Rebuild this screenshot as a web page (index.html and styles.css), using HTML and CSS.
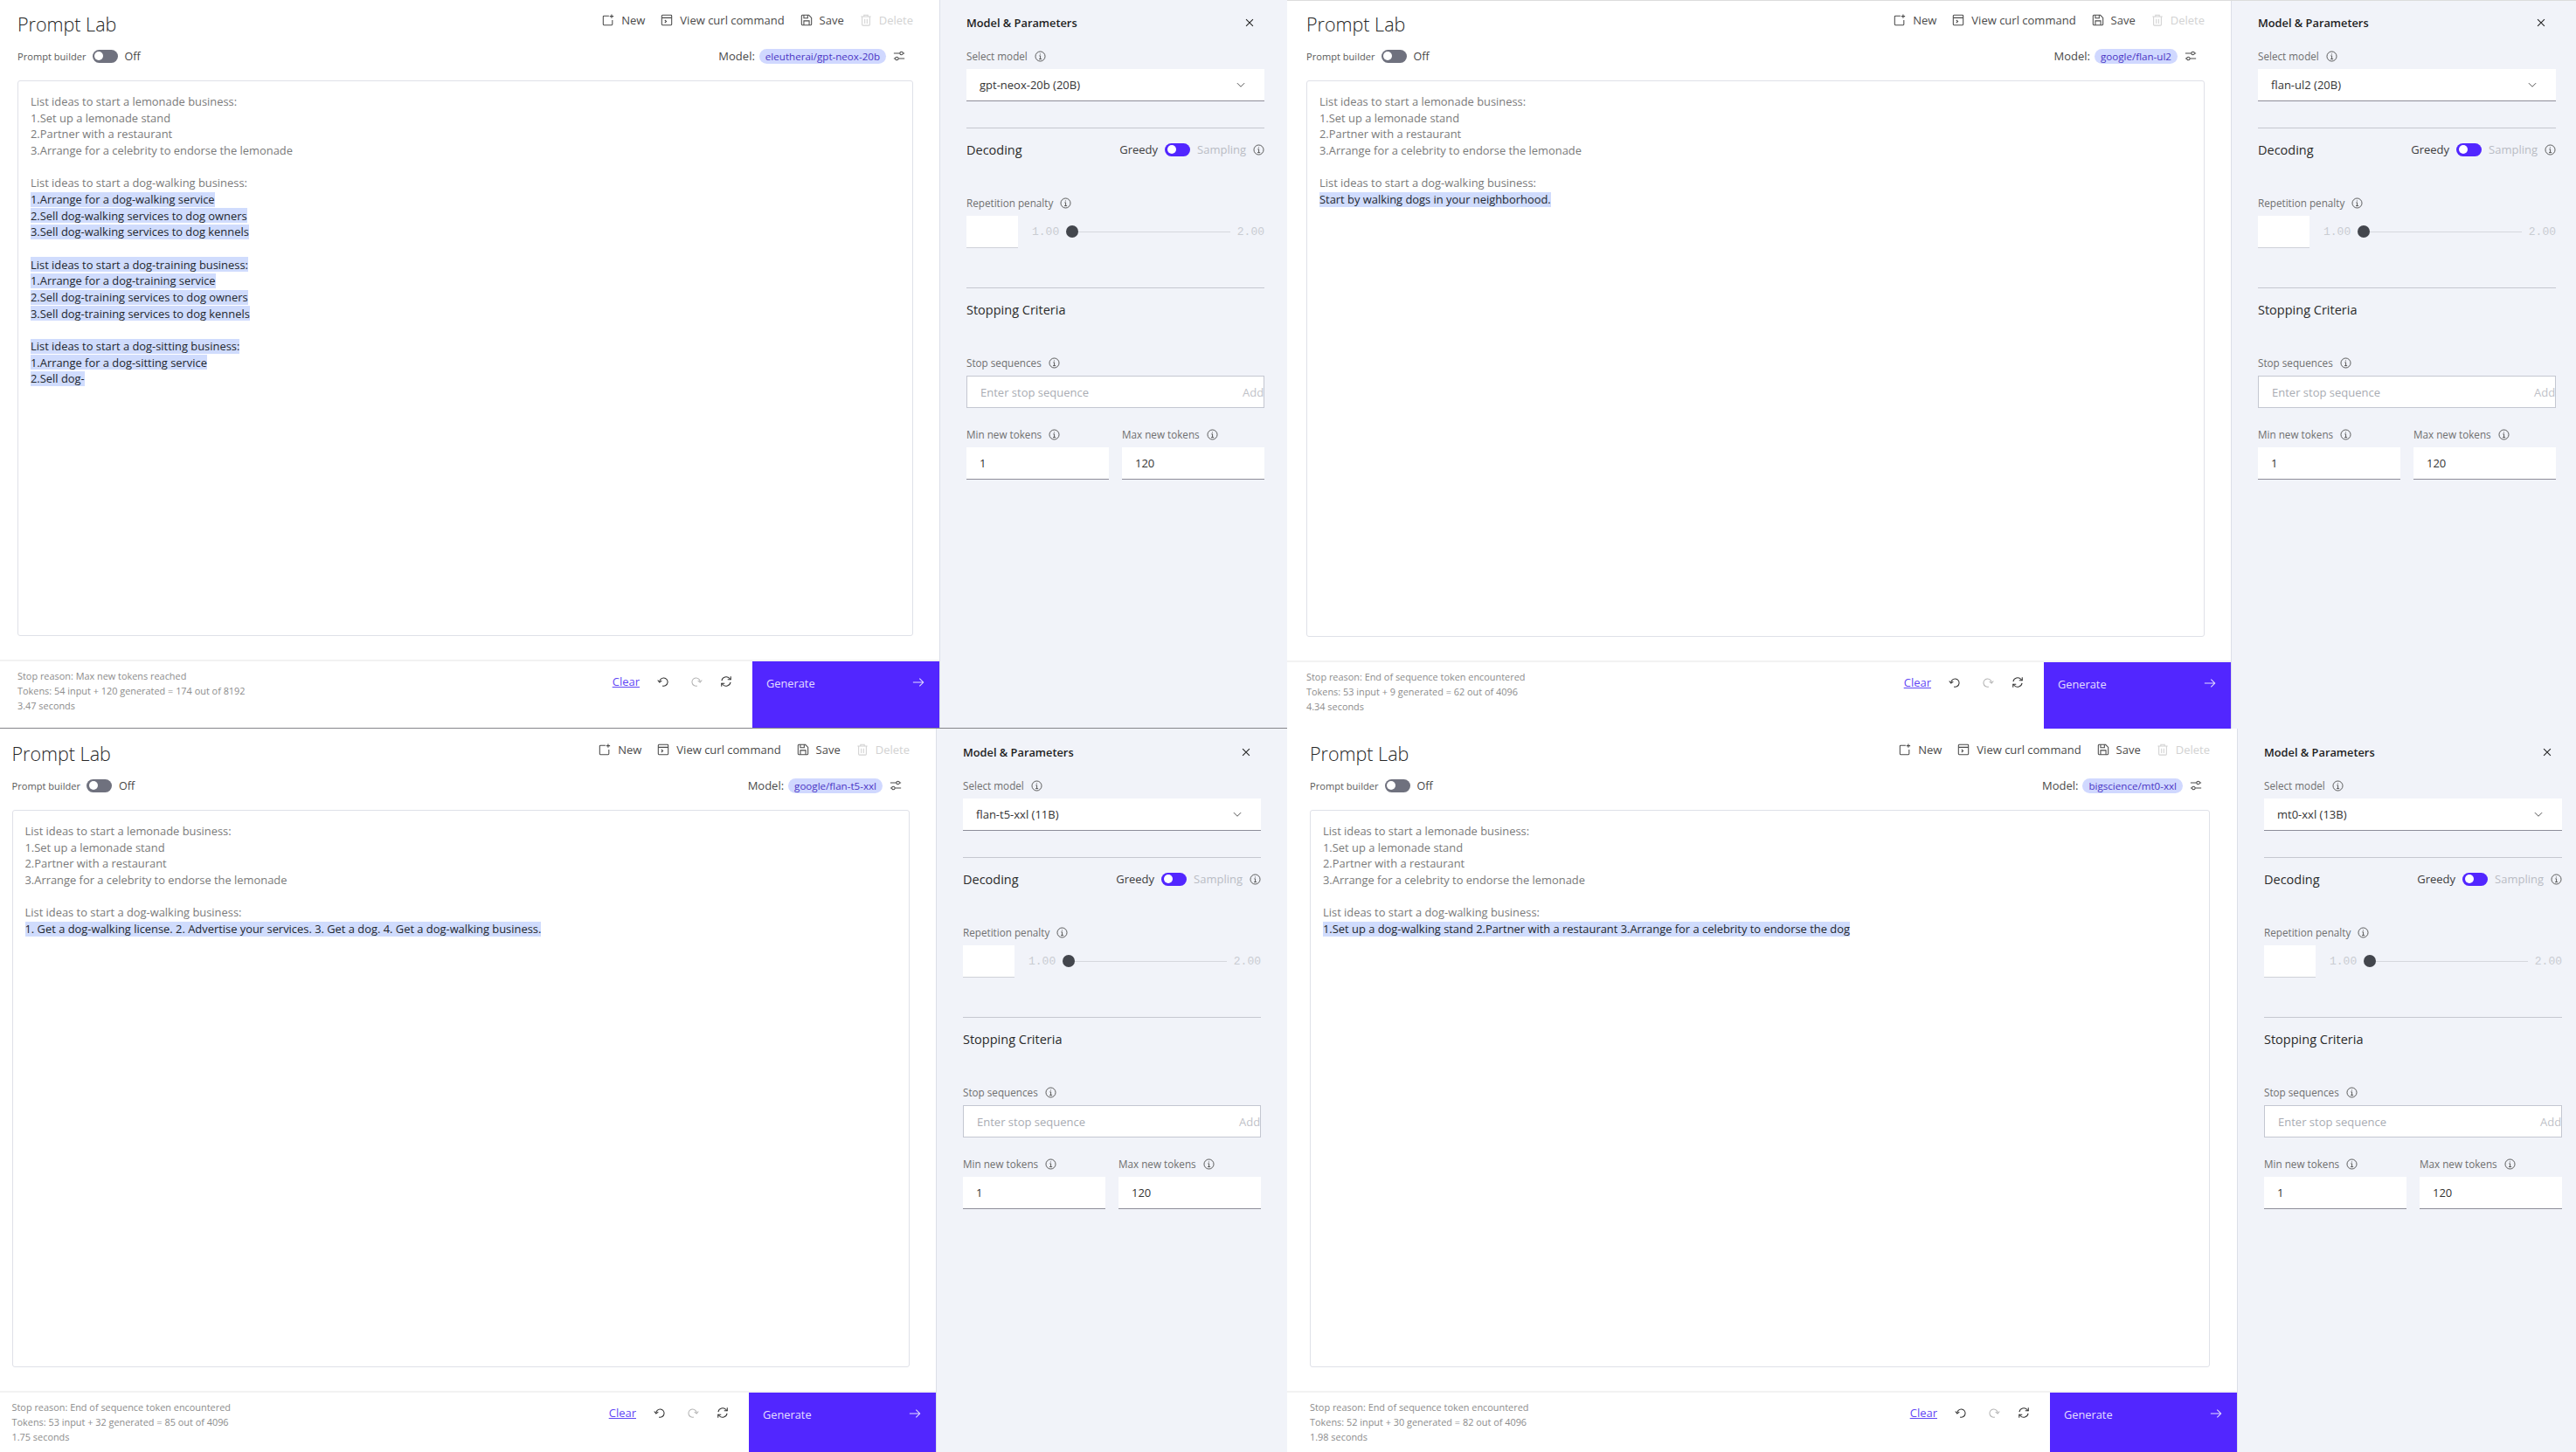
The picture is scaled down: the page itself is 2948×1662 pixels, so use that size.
FILE: index.html
```html
<!DOCTYPE html>
<html lang="en">
<head>
<meta charset="utf-8">
<title>Prompt Lab</title>
<link rel="stylesheet" href="styles.css">
</head>
<body>
<svg class="sprite" xmlns="http://www.w3.org/2000/svg">
  <symbol id="i-new" viewBox="0 0 16 16"><path d="M9 2.5H2.5a1 1 0 0 0-1 1v10a1 1 0 0 0 1 1h10a1 1 0 0 0 1-1V8"/><path d="M12.5 .5v5M10 3h5"/></symbol>
  <symbol id="i-term" viewBox="0 0 16 16"><rect x="1.5" y="1.5" width="13" height="13" rx="1"/><path d="M1.5 5h13M5.5 8l2 1.7-2 1.7"/></symbol>
  <symbol id="i-save" viewBox="0 0 16 16"><path d="M1.5 2.5a1 1 0 0 1 1-1h8.5l3.500 3.500v8.500a1 1 0 0 1-1 1h-11a1 1 0 0 1-1-1z"/><path d="M4.500 14.500V9h7v5.500M4.500 1.500V5.500h5V1.500"/></symbol>
  <symbol id="i-trash" viewBox="0 0 16 16"><path d="M1.500 3.500h13M5.500 3.500v-2h5v2M3 3.500V14a1 1 0 0 0 1 1h8a1 1 0 0 0 1-1V3.500M6.500 6.500v6M9.500 6.500v6"/></symbol>
  <symbol id="i-adjust" viewBox="0 0 16 16"><path d="M1 4.500h8M13 4.500h2M1 11.500h2M7 11.500h8"/><circle cx="11" cy="4.500" r="2"/><circle cx="5" cy="11.500" r="2"/></symbol>
  <symbol id="i-info" viewBox="0 0 16 16"><circle cx="8" cy="8" r="6.800"/><path d="M6.600 7.200H8.100V11.800M6.200 11.800h3.800"/><path d="M7.900 4.300v1.200"/></symbol>
  <symbol id="i-close" viewBox="0 0 16 16"><path d="M3.500 3.500l9 9M12.500 3.500l-9 9"/></symbol>
  <symbol id="i-chevron" viewBox="0 0 16 16"><path d="M2.500 5.500L8 11l5.500-5.500"/></symbol>
  <symbol id="i-undo" viewBox="0 0 16 16"><path d="M3.200 9A5.300 5.300 0 1 1 7 13.800"/><path d="M.8 6.300l2.400 2.900 2.900-2.300"/></symbol>
  <symbol id="i-redo" viewBox="0 0 16 16"><path d="M12.800 9A5.300 5.300 0 1 0 9 13.800"/><path d="M15.200 6.300l-2.400 2.900-2.900-2.300"/></symbol>
  <symbol id="i-refresh" viewBox="0 0 16 16"><path d="M2.200 7A6 6 0 0 1 12.500 4L14 5.500"/><path d="M14 1.500v4h-4"/><path d="M13.800 9A6 6 0 0 1 3.500 12L2 10.500"/><path d="M2 14.500v-4h4"/></symbol>
  <symbol id="i-arrow" viewBox="0 0 16 16"><path d="M1 8h13.500M9.500 3l5 5-5 5"/></symbol>
</svg>

<div class="canvas">

<section class="shot shot-1">
  <div class="main">
    <div class="head"><h1 class="title">Prompt Lab</h1>
      <nav class="actions">
        <span class="action"><svg class="ico"><use href="#i-new"/></svg>New</span>
        <span class="action"><svg class="ico"><use href="#i-term"/></svg>View curl command</span>
        <span class="action"><svg class="ico"><use href="#i-save"/></svg>Save</span>
        <span class="action action-off"><svg class="ico"><use href="#i-trash"/></svg>Delete</span>
      </nav>
    </div>
    <div class="subhead">
      <div class="builder"><span>Prompt builder</span><span class="toggle"></span><span class="off">Off</span></div>
      <div class="model"><span>Model:</span><span class="chip">eleutherai/gpt-neox-20b</span><svg class="ico adjust"><use href="#i-adjust"/></svg></div>
    </div>
    <div class="box"><div class="prompt">List ideas to start a lemonade business:
1.Set up a lemonade stand
2.Partner with a restaurant
3.Arrange for a celebrity to endorse the lemonade

List ideas to start a dog-walking business:
<mark class="gen">1.Arrange for a dog-walking service
2.Sell dog-walking services to dog owners
3.Sell dog-walking services to dog kennels

List ideas to start a dog-training business:
1.Arrange for a dog-training service
2.Sell dog-training services to dog owners
3.Sell dog-training services to dog kennels

List ideas to start a dog-sitting business:
1.Arrange for a dog-sitting service
2.Sell dog-</mark></div></div>
    <footer class="foot">
      <div class="stats"><div>Stop reason: Max new tokens reached</div><div>Tokens: 54 input + 120 generated = 174 out of 8192</div><div>3.47 seconds</div></div>
      <div class="controls"><a class="clear">Clear</a><svg class="ico ctl"><use href="#i-undo"/></svg><svg class="ico ctl ctl-off"><use href="#i-redo"/></svg><svg class="ico ctl"><use href="#i-refresh"/></svg></div>
      <button class="generate"><span>Generate</span><svg class="ico arrow"><use href="#i-arrow"/></svg></button>
    </footer>
  </div>
  <aside class="side"><div class="side-in">
    <div class="side-head"><span>Model &amp; Parameters</span><svg class="ico close"><use href="#i-close"/></svg></div>
    <div class="label lab-model">Select model<svg class="ico info"><use href="#i-info"/></svg></div>
    <div class="select"><span>gpt-neox-20b (20B)</span><svg class="ico chev"><use href="#i-chevron"/></svg></div>
    <hr class="rule rule-a">
    <div class="sec"><span>Decoding</span><div class="switch"><span>Greedy</span><span class="toggle toggle-on"></span><span class="dim">Sampling</span><svg class="ico info"><use href="#i-info"/></svg></div></div>
    <div class="label lab-rep">Repetition penalty<svg class="ico info"><use href="#i-info"/></svg></div>
    <div class="slider"><span class="num"></span><span class="mono lo">1.00</span><span class="track"></span><span class="mono">2.00</span></div>
    <hr class="rule rule-b">
    <div class="sec"><span>Stopping Criteria</span></div>
    <div class="label lab-rep">Stop sequences<svg class="ico info"><use href="#i-info"/></svg></div>
    <div class="stop"><span>Enter stop sequence</span><span class="add">Add</span></div>
    <div class="pair">
      <div><div class="label">Min new tokens<svg class="ico info"><use href="#i-info"/></svg></div><div class="field">1</div></div>
      <div><div class="label">Max new tokens<svg class="ico info"><use href="#i-info"/></svg></div><div class="field">120</div></div>
    </div>
  </div></aside>
</section>

<section class="shot shot-2">
  <div class="main">
    <div class="head"><h1 class="title">Prompt Lab</h1>
      <nav class="actions">
        <span class="action"><svg class="ico"><use href="#i-new"/></svg>New</span>
        <span class="action"><svg class="ico"><use href="#i-term"/></svg>View curl command</span>
        <span class="action"><svg class="ico"><use href="#i-save"/></svg>Save</span>
        <span class="action action-off"><svg class="ico"><use href="#i-trash"/></svg>Delete</span>
      </nav>
    </div>
    <div class="subhead">
      <div class="builder"><span>Prompt builder</span><span class="toggle"></span><span class="off">Off</span></div>
      <div class="model"><span>Model:</span><span class="chip">google/flan-ul2</span><svg class="ico adjust"><use href="#i-adjust"/></svg></div>
    </div>
    <div class="box"><div class="prompt">List ideas to start a lemonade business:
1.Set up a lemonade stand
2.Partner with a restaurant
3.Arrange for a celebrity to endorse the lemonade

List ideas to start a dog-walking business:
<mark class="gen">Start by walking dogs in your neighborhood.</mark></div></div>
    <footer class="foot">
      <div class="stats"><div>Stop reason: End of sequence token encountered</div><div>Tokens: 53 input + 9 generated = 62 out of 4096</div><div>4.34 seconds</div></div>
      <div class="controls"><a class="clear">Clear</a><svg class="ico ctl"><use href="#i-undo"/></svg><svg class="ico ctl ctl-off"><use href="#i-redo"/></svg><svg class="ico ctl"><use href="#i-refresh"/></svg></div>
      <button class="generate"><span>Generate</span><svg class="ico arrow"><use href="#i-arrow"/></svg></button>
    </footer>
  </div>
  <aside class="side"><div class="side-in">
    <div class="side-head"><span>Model &amp; Parameters</span><svg class="ico close"><use href="#i-close"/></svg></div>
    <div class="label lab-model">Select model<svg class="ico info"><use href="#i-info"/></svg></div>
    <div class="select"><span>flan-ul2 (20B)</span><svg class="ico chev"><use href="#i-chevron"/></svg></div>
    <hr class="rule rule-a">
    <div class="sec"><span>Decoding</span><div class="switch"><span>Greedy</span><span class="toggle toggle-on"></span><span class="dim">Sampling</span><svg class="ico info"><use href="#i-info"/></svg></div></div>
    <div class="label lab-rep">Repetition penalty<svg class="ico info"><use href="#i-info"/></svg></div>
    <div class="slider"><span class="num"></span><span class="mono lo">1.00</span><span class="track"></span><span class="mono">2.00</span></div>
    <hr class="rule rule-b">
    <div class="sec"><span>Stopping Criteria</span></div>
    <div class="label lab-rep">Stop sequences<svg class="ico info"><use href="#i-info"/></svg></div>
    <div class="stop"><span>Enter stop sequence</span><span class="add">Add</span></div>
    <div class="pair">
      <div><div class="label">Min new tokens<svg class="ico info"><use href="#i-info"/></svg></div><div class="field">1</div></div>
      <div><div class="label">Max new tokens<svg class="ico info"><use href="#i-info"/></svg></div><div class="field">120</div></div>
    </div>
  </div></aside>
</section>

<section class="shot shot-3">
  <div class="main">
    <div class="head"><h1 class="title">Prompt Lab</h1>
      <nav class="actions">
        <span class="action"><svg class="ico"><use href="#i-new"/></svg>New</span>
        <span class="action"><svg class="ico"><use href="#i-term"/></svg>View curl command</span>
        <span class="action"><svg class="ico"><use href="#i-save"/></svg>Save</span>
        <span class="action action-off"><svg class="ico"><use href="#i-trash"/></svg>Delete</span>
      </nav>
    </div>
    <div class="subhead">
      <div class="builder"><span>Prompt builder</span><span class="toggle"></span><span class="off">Off</span></div>
      <div class="model"><span>Model:</span><span class="chip">google/flan-t5-xxl</span><svg class="ico adjust"><use href="#i-adjust"/></svg></div>
    </div>
    <div class="box"><div class="prompt">List ideas to start a lemonade business:
1.Set up a lemonade stand
2.Partner with a restaurant
3.Arrange for a celebrity to endorse the lemonade

List ideas to start a dog-walking business:
<mark class="gen">1. Get a dog-walking license. 2. Advertise your services. 3. Get a dog. 4. Get a dog-walking business.</mark></div></div>
    <footer class="foot">
      <div class="stats"><div>Stop reason: End of sequence token encountered</div><div>Tokens: 53 input + 32 generated = 85 out of 4096</div><div>1.75 seconds</div></div>
      <div class="controls"><a class="clear">Clear</a><svg class="ico ctl"><use href="#i-undo"/></svg><svg class="ico ctl ctl-off"><use href="#i-redo"/></svg><svg class="ico ctl"><use href="#i-refresh"/></svg></div>
      <button class="generate"><span>Generate</span><svg class="ico arrow"><use href="#i-arrow"/></svg></button>
    </footer>
  </div>
  <aside class="side"><div class="side-in">
    <div class="side-head"><span>Model &amp; Parameters</span><svg class="ico close"><use href="#i-close"/></svg></div>
    <div class="label lab-model">Select model<svg class="ico info"><use href="#i-info"/></svg></div>
    <div class="select"><span>flan-t5-xxl (11B)</span><svg class="ico chev"><use href="#i-chevron"/></svg></div>
    <hr class="rule rule-a">
    <div class="sec"><span>Decoding</span><div class="switch"><span>Greedy</span><span class="toggle toggle-on"></span><span class="dim">Sampling</span><svg class="ico info"><use href="#i-info"/></svg></div></div>
    <div class="label lab-rep">Repetition penalty<svg class="ico info"><use href="#i-info"/></svg></div>
    <div class="slider"><span class="num"></span><span class="mono lo">1.00</span><span class="track"></span><span class="mono">2.00</span></div>
    <hr class="rule rule-b">
    <div class="sec"><span>Stopping Criteria</span></div>
    <div class="label lab-rep">Stop sequences<svg class="ico info"><use href="#i-info"/></svg></div>
    <div class="stop"><span>Enter stop sequence</span><span class="add">Add</span></div>
    <div class="pair">
      <div><div class="label">Min new tokens<svg class="ico info"><use href="#i-info"/></svg></div><div class="field">1</div></div>
      <div><div class="label">Max new tokens<svg class="ico info"><use href="#i-info"/></svg></div><div class="field">120</div></div>
    </div>
  </div></aside>
</section>

<section class="shot shot-4">
  <div class="main">
    <div class="head"><h1 class="title">Prompt Lab</h1>
      <nav class="actions">
        <span class="action"><svg class="ico"><use href="#i-new"/></svg>New</span>
        <span class="action"><svg class="ico"><use href="#i-term"/></svg>View curl command</span>
        <span class="action"><svg class="ico"><use href="#i-save"/></svg>Save</span>
        <span class="action action-off"><svg class="ico"><use href="#i-trash"/></svg>Delete</span>
      </nav>
    </div>
    <div class="subhead">
      <div class="builder"><span>Prompt builder</span><span class="toggle"></span><span class="off">Off</span></div>
      <div class="model"><span>Model:</span><span class="chip">bigscience/mt0-xxl</span><svg class="ico adjust"><use href="#i-adjust"/></svg></div>
    </div>
    <div class="box"><div class="prompt">List ideas to start a lemonade business:
1.Set up a lemonade stand
2.Partner with a restaurant
3.Arrange for a celebrity to endorse the lemonade

List ideas to start a dog-walking business:
<mark class="gen">1.Set up a dog-walking stand 2.Partner with a restaurant 3.Arrange for a celebrity to endorse the dog</mark></div></div>
    <footer class="foot">
      <div class="stats"><div>Stop reason: End of sequence token encountered</div><div>Tokens: 52 input + 30 generated = 82 out of 4096</div><div>1.98 seconds</div></div>
      <div class="controls"><a class="clear">Clear</a><svg class="ico ctl"><use href="#i-undo"/></svg><svg class="ico ctl ctl-off"><use href="#i-redo"/></svg><svg class="ico ctl"><use href="#i-refresh"/></svg></div>
      <button class="generate"><span>Generate</span><svg class="ico arrow"><use href="#i-arrow"/></svg></button>
    </footer>
  </div>
  <aside class="side"><div class="side-in">
    <div class="side-head"><span>Model &amp; Parameters</span><svg class="ico close"><use href="#i-close"/></svg></div>
    <div class="label lab-model">Select model<svg class="ico info"><use href="#i-info"/></svg></div>
    <div class="select"><span>mt0-xxl (13B)</span><svg class="ico chev"><use href="#i-chevron"/></svg></div>
    <hr class="rule rule-a">
    <div class="sec"><span>Decoding</span><div class="switch"><span>Greedy</span><span class="toggle toggle-on"></span><span class="dim">Sampling</span><svg class="ico info"><use href="#i-info"/></svg></div></div>
    <div class="label lab-rep">Repetition penalty<svg class="ico info"><use href="#i-info"/></svg></div>
    <div class="slider"><span class="num"></span><span class="mono lo">1.00</span><span class="track"></span><span class="mono">2.00</span></div>
    <hr class="rule rule-b">
    <div class="sec"><span>Stopping Criteria</span></div>
    <div class="label lab-rep">Stop sequences<svg class="ico info"><use href="#i-info"/></svg></div>
    <div class="stop"><span>Enter stop sequence</span><span class="add">Add</span></div>
    <div class="pair">
      <div><div class="label">Min new tokens<svg class="ico info"><use href="#i-info"/></svg></div><div class="field">1</div></div>
      <div><div class="label">Max new tokens<svg class="ico info"><use href="#i-info"/></svg></div><div class="field">120</div></div>
    </div>
  </div></aside>
</section>

</div>
</body>
</html>
```
FILE: styles.css
```css
* { box-sizing: border-box; }
html, body { margin: 0; padding: 0; background: #fff; overflow: hidden; }
body { font-family: "Open Sans", "Noto Sans", sans-serif; font-size: 13px; color: #393939; }
.sprite { display: none; }

.canvas { display: grid; grid-template-columns: 1473px 1475px; grid-template-rows: 834px 828px; width: 2948px; height: 1662px; }
.shot { position: relative; display: flex; align-items: flex-start; overflow: hidden; --main-w: 1075px; --main-h: 833px; --pad-l: 20px; --pad-r: 30px; --top: 0px; }
.shot-1::after { content: ""; position: absolute; left: 0; right: 0; bottom: 0; height: 1px; background: #85858a; }
.shot-2 { --main-w: 1080px; --main-h: 834px; --pad-l: 22px; }
.shot-2::after { content: ""; position: absolute; left: 0; right: 0; top: 0; height: 1px; background: #dcdcdc; }
.shot-3 { --main-w: 1071px; --main-h: 836px; --pad-l: 13.5px; --top: 1px; }
.shot-4 { --main-w: 1087px; --main-h: 836px; --pad-l: 26px; --pad-r: 31px; --top: 1px; }

.ico { width: 14px; height: 14px; flex: none; fill: none; stroke: currentColor; stroke-width: 1.2; }

/* main column */
.main { flex: none; display: flex; flex-direction: column; width: var(--main-w); height: var(--main-h); padding-top: var(--top); background: #fff; }
.head { display: flex; justify-content: space-between; align-items: flex-start; height: 46px; padding: 0 var(--pad-r) 0 var(--pad-l); }
.title { margin: 13px 0 0; font-size: 21.500px; line-height: 30px; font-weight: 300; color: #262626; }
.actions { display: flex; gap: 18px; margin-top: 15px; }
.action { display: flex; align-items: center; gap: 8px; height: 16px; font-size: 13px; color: #4a4a4a; }
.action-off { color: #d2d2d2; }
.subhead { display: flex; justify-content: space-between; align-items: center; height: 36px; padding: 0 var(--pad-r) 0 var(--pad-l); }
.builder { display: flex; align-items: center; font-size: 11.100px; color: #5a5a5a; }
.toggle { position: relative; flex: none; display: block; width: 29px; height: 15px; border-radius: 8px; background: #6f717e; }
.toggle::after { content: ""; position: absolute; left: 2.500px; top: 2.500px; width: 10px; height: 10px; border-radius: 50%; background: #fff; }
.toggle-on { background: #5226ff; }
.builder .toggle { margin: 0 8px 0 7px; }
.off { font-size: 12.500px; color: #444; }
.model { display: flex; align-items: center; font-size: 13px; color: #4a4a4a; padding-right: 9px; }
.chip { margin: 0 8px 0 5px; padding: 0 7px; height: 17px; line-height: 17px; border-radius: 9px; background: #d0d8ff; color: #4a34c4; font-size: 11.600px; }
.box { flex: 1; margin: 10px var(--pad-r) 0 var(--pad-l); padding: 14px 14px 0; border: 1px solid #dfe1e8; border-radius: 3px; }
.prompt { white-space: pre-line; font-size: 12.900px; line-height: 18.670px; color: #7a7a7a; }
.gen { background: linear-gradient(#d0dcfd, #d0dcfd) 0 50% / 100% 17px no-repeat; color: #23272e; -webkit-box-decoration-break: clone; box-decoration-break: clone; }

.foot { flex: none; display: flex; height: 76px; margin-top: 29px; background: #fff; box-shadow: 0 -2px 0 #f2f2f2; }
.stats { flex: 1; padding: 8px 0 0 var(--pad-l); font-size: 10.900px; line-height: 17px; color: #8c8c8c; }
.controls { flex: none; display: flex; align-items: center; height: 16px; margin: 15px 23px 0 0; }
.clear { font-size: 13px; color: #5f47f5; text-decoration: underline; margin-right: 20px; }
.ctl { color: #333; margin-right: 24px; }
.ctl-off { color: #b4b4b4; margin-right: 20px; }
.ctl:last-child { margin-right: 0; }
.generate { flex: none; display: flex; justify-content: space-between; align-items: flex-start; width: 214px; padding: 16px 17px 0 16px; border: 0; background: #5226ff; color: #e4deff; font: inherit; font-size: 12.800px; line-height: 18px; }
.arrow { margin-top: 1px; }

/* side panel */
.side { flex: 1; align-self: stretch; min-width: 0; overflow: hidden; background: #f1f3f9; border-left: 1px solid #dcdfe8; padding: calc(14px + var(--top)) 0 0 30px; }
.side-in { width: 341px; }
.side-head { display: flex; justify-content: space-between; align-items: center; height: 24px; font-size: 12.800px; font-weight: 600; color: #1e1e1e; padding-right: 10px; }
.close { color: #222; }
.label { display: flex; align-items: center; gap: 8px; height: 16px; font-size: 11.700px; color: #6f6f6f; }
.info { width: 13px; height: 13px; color: #555; }
.lab-model { margin: 18px 0 7px; }
.select { display: flex; justify-content: space-between; align-items: center; height: 37px; padding: 0 21px 0 15px; background: #fff; border-bottom: 1px solid #8d8d99; font-size: 13px; color: #333; }
.chev { color: #444; width: 12px; height: 12px; }
.rule { margin: 0; border: 0; border-top: 1px solid #c6c8d0; }
.rule-a { margin-top: 30px; }
.rule-b { margin-top: 45px; }
.sec { display: flex; justify-content: space-between; align-items: center; height: 48px; font-size: 14.500px; color: #2b2b2b; }
.switch { display: flex; align-items: center; gap: 8px; font-size: 13px; color: #3d3d3d; }
.dim { color: #b9bcc4; }
.lab-rep { margin: 29px 0 7px; }
.slider { display: flex; align-items: center; height: 37px; }
.num { flex: none; width: 59px; height: 37px; background: #fff; border-bottom: 1px solid #cfd1d8; }
.mono { flex: none; font-family: "Liberation Mono", "DejaVu Sans Mono", monospace; font-size: 13px; color: #c9ccd2; }
.lo { margin: 0 8px 0 16px; }
.track { position: relative; flex: 1; height: 1px; margin-right: 8px; background: #d5d7dd; }
.track::before { content: ""; position: absolute; left: 0; top: -7px; width: 14px; height: 14px; border-radius: 50%; background: #43464d; }
.stop { display: flex; justify-content: space-between; align-items: center; height: 37px; margin-top: 1px; padding-left: 15px; background: #fff; border: 1px solid #c4c7d1; font-size: 13px; color: #a9acb3; overflow: hidden; }
.add { flex: none; width: 24px; white-space: nowrap; color: #c0c2c8; }
.pair { display: grid; grid-template-columns: 163px 163px; gap: 15px; margin-top: 22px; }
.field { height: 37px; margin-top: 7px; padding-left: 15px; line-height: 37px; background: #fff; border-bottom: 1px solid #8d8d99; font-size: 13px; color: #333; }
```
